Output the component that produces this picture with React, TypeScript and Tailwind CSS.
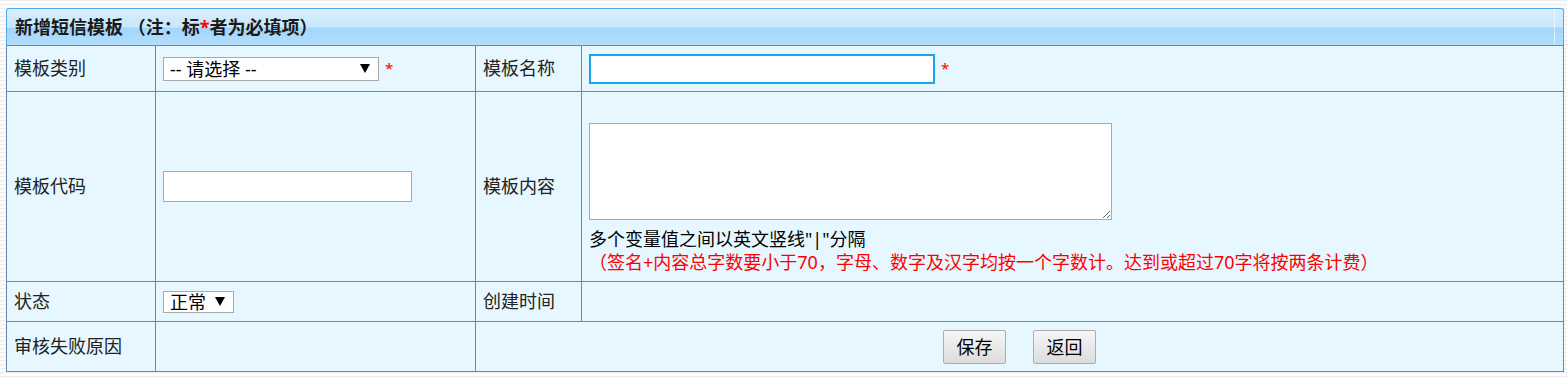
import type { ReactNode } from "react";

const FONT = "font-['Noto_Sans','Noto_Sans_CJK_SC',sans-serif]";

function Caret() {
  return (
    <svg width="10" height="9" viewBox="0 0 10 9" aria-hidden="true">
      <path d="M0 0 H10 L5 9 Z" fill="#000" />
    </svg>
  );
}

function Required() {
  return <span className="ml-[6px] text-[15px] leading-none text-[#ff0000]">*</span>;
}

function FakeSelect({ value, className }: { value: string; className: string }) {
  return (
    <div
      className={`flex items-center justify-between border border-[#a9a9a9] bg-white pl-[6px] pr-[8px] text-[18px] leading-none text-black ${className}`}
    >
      <span>{value}</span>
      <Caret />
    </div>
  );
}

function Label({ children }: { children: ReactNode }) {
  return (
    <td className="border border-[#6787b7] px-[7px] align-middle text-[18px] text-[#222]">{children}</td>
  );
}

function Cell({
  children,
  className = "",
  colSpan,
}: {
  children?: ReactNode;
  className?: string;
  colSpan?: number;
}) {
  return (
    <td colSpan={colSpan} className={`border border-[#6787b7] px-[7px] text-[18px] text-[#222] ${className}`}>
      {children}
    </td>
  );
}

function Button({ children }: { children: ReactNode }) {
  return (
    <button
      type="button"
      className="h-[34px] w-[63px] whitespace-nowrap rounded-[2px] border border-[#adadad] bg-[linear-gradient(to_bottom,#f6f6f6,#dcdcdc)] text-[18px] leading-none text-black"
    >
      {children}
    </button>
  );
}

export default function App() {
  return (
    <div
      className={`${FONT} min-h-[379px] w-full bg-[repeating-linear-gradient(to_bottom,#ececec_0px,#ececec_1px,#fbfbfb_1px,#fbfbfb_4px)] pl-[6px] pr-[3px] pt-[8px]`}
    >
      <div className="relative flex h-[37px] items-center rounded-t-[3px] border border-b-0 border-[#52aaee] bg-[linear-gradient(to_bottom,#d7eefd_0%,#c8e7fc_50%,#a2d6fb_53%,#b3defc_100%)] pl-[8px]">
        <h1 className="text-[18px] font-bold leading-none text-[#1a1a1a]">
          新增短信模板 （注：标<span className="text-[#ff0000]">*</span>者为必填项）
        </h1>
        <span className="absolute right-[8px] top-0 h-full w-px bg-white/60" />
      </div>

      <table className="w-full table-fixed border-collapse bg-[#e6f7ff]">
        <colgroup>
          <col className="w-[149px]" />
          <col className="w-[320px]" />
          <col className="w-[106px]" />
          <col />
        </colgroup>
        <tbody>
          <tr className="h-[46px]">
            <Label>模板类别</Label>
            <Cell>
              <div className="flex items-center">
                <FakeSelect value="-- 请选择 --" className="h-[24px] w-[216px]" />
                <Required />
              </div>
            </Cell>
            <Label>模板名称</Label>
            <Cell>
              <div className="flex items-center">
                <input
                  type="text"
                  aria-label="模板名称"
                  className="h-[30px] w-[346px] border-2 border-[#1ba5e8] bg-white outline-none"
                />
                <Required />
              </div>
            </Cell>
          </tr>
          <tr className="h-[190px]">
            <Label>模板代码</Label>
            <Cell>
              <input
                type="text"
                aria-label="模板代码"
                className="block h-[31px] w-[249px] border border-[#a9a9a9] bg-white outline-none"
              />
            </Cell>
            <Label>模板内容</Label>
            <Cell className="align-top pt-[31px]">
              <textarea
                aria-label="模板内容"
                className="mb-[8px] block h-[97px] w-[523px] border border-[#a9a9a9] bg-white outline-none"
              />
              <p className="text-[18px] leading-[23px] text-black">多个变量值之间以英文竖线"|"分隔</p>
              <p className="text-[18px] leading-[23px] text-[#ff0000]">
                （签名+内容总字数要小于70，字母、数字及汉字均按一个字数计。达到或超过70字将按两条计费）
              </p>
            </Cell>
          </tr>
          <tr className="h-[40px]">
            <Label>状态</Label>
            <Cell>
              <FakeSelect value="正常" className="h-[22px] w-[71px]" />
            </Cell>
            <Label>创建时间</Label>
            <Cell />
          </tr>
          <tr className="h-[50px]">
            <Label>审核失败原因</Label>
            <Cell />
            <Cell colSpan={2}>
              <div className="flex justify-center gap-[27px]">
                <Button>保存</Button>
                <Button>返回</Button>
              </div>
            </Cell>
          </tr>
        </tbody>
      </table>
    </div>
  );
}
